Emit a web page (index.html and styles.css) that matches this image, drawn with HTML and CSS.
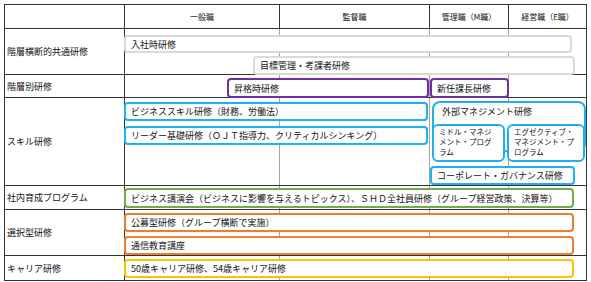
FILE: index.html
```html
<!DOCTYPE html>
<html lang="ja">
<head>
<meta charset="utf-8">
<title>研修体系</title>
<link rel="stylesheet" href="styles.css">
</head>
<body>
<div class="chart">
  <div class="hd"></div>
  <div class="hd">一般職</div>
  <div class="hd">監督職</div>
  <div class="hd">管理職（M職）</div>
  <div class="hd hd-last">経営職（E職）</div>

  <div class="label">階層横断的共通研修</div>
  <div class="row row-common">
    <div class="box gray b-nyusha">入社時研修</div>
    <div class="box gray b-mokuhyo">目標管理・考課者研修</div>
  </div>

  <div class="label">階層別研修</div>
  <div class="row row-rank">
    <div class="box purple b-shokaku">昇格時研修</div>
    <div class="box purple b-shinnin">新任課長研修</div>
  </div>

  <div class="label">スキル研修</div>
  <div class="row row-skill">
    <div class="skill-left">
      <div class="box blue wide304">ビジネススキル研修（財務、労働法）</div>
      <div class="box blue wide304 b-leader">リーダー基礎研修（ＯＪＴ指導力、クリティカルシンキング）</div>
    </div>
    <div class="skill-right">
      <div class="group">
        <div class="group-title">外部マネジメント研修</div>
        <div class="group-items">
          <div class="box blue mini mini-mid">ミドル・マネジ<br>メント・プログ<br>ラム</div>
          <div class="box blue mini mini-exe">エグゼクティブ・<br>マネジメント・プ<br>ログラム</div>
        </div>
      </div>
      <div class="box blue b-corp">コーポレート・ガバナンス研修</div>
    </div>
  </div>

  <div class="label">社内育成プログラム</div>
  <div class="row row-inhouse">
    <div class="box green full h20">ビジネス講演会（ビジネスに影響を与えるトピックス）、ＳＨＤ全社員研修（グループ経営政策、決算等）</div>
  </div>

  <div class="label">選択型研修</div>
  <div class="row row-select">
    <div class="box orange full">公募型研修（グループ横断で実施）</div>
    <div class="box orange full b-tsushin">通信教育講座</div>
  </div>

  <div class="label label-last">キャリア研修</div>
  <div class="row row-career row-last">
    <div class="box yellow full">50歳キャリア研修、54歳キャリア研修</div>
  </div>
</div>
</body>
</html>
```

FILE: styles.css
```css
* { box-sizing: border-box; }

html, body {
  margin: 0;
  background: #ffffff;
}

body {
  padding: 4px;
  font-family: "Noto Sans CJK JP", "Noto Sans", sans-serif;
  color: #111111;
}

.chart {
  display: grid;
  grid-template-columns: 120px 155px 150px 79px 77px;
  grid-template-rows: 24px 46px 23px 88px 24px 46px 24px;
  width: 583px;
  border: 1px solid #333333;
}

.hd {
  border-right: 1px solid #333333;
  border-bottom: 1px solid #333333;
  display: flex;
  align-items: center;
  justify-content: center;
  font-size: 8px;
  white-space: nowrap;
}

.hd-last { border-right: 0; }

.label {
  grid-column: 1;
  border-right: 1px solid #333333;
  border-bottom: 1px solid #333333;
  display: flex;
  align-items: center;
  padding-left: 2px;
  font-size: 9px;
  white-space: nowrap;
}

.label-last { border-bottom: 0; }

.row {
  grid-column: 2 / 6;
  border-bottom: 1px solid #333333;
  display: flex;
  align-items: flex-start;
  background:
    linear-gradient(#a6a6a6, #a6a6a6) 154px 0 / 1px 100% no-repeat,
    linear-gradient(#a6a6a6, #a6a6a6) 304px 0 / 1px 100% no-repeat,
    linear-gradient(#a6a6a6, #a6a6a6) 383px 0 / 1px 100% no-repeat;
}

.row-last { border-bottom: 0; }

/* boxes */
.box {
  flex: none;
  height: 19px;
  border: 2px solid #cccccc;
  border-radius: 4px;
  background: #ffffff;
  padding: 0 5px;
  display: flex;
  align-items: center;
  font-size: 9px;
  white-space: nowrap;
}

.gray { border-color: #dadada; }
.purple { border-color: #7030a0; }
.blue { border-color: #1fb1ee; }
.green { border-color: #70ad47; }
.orange { border-color: #ed7d31; }
.yellow { border-color: #ffc000; }

.full {
  width: 450px;
  margin-left: -1px;
}

.h20 { height: 20px; }

/* row: common */
.row-common {
  flex-direction: column;
  padding-top: 6px;
}

.b-nyusha {
  width: 448px;
  height: 18px;
  margin-left: -1px;
}

.b-mokuhyo {
  width: 322px;
  margin-top: 3px;
  margin-left: 128px;
}

/* row: rank */
.row-rank { padding-top: 3px; }

.b-shokaku {
  width: 202px;
  height: 20px;
  margin-left: 102px;
}

.b-shinnin {
  width: 79px;
  height: 20px;
  margin-left: 1px;
}

/* row: skill */
.skill-left {
  width: 304px;
  margin-left: -1px;
  padding-top: 4px;
  display: flex;
  flex-direction: column;
}

.wide304 { width: 304px; }

.b-leader { margin-top: 5px; }

.skill-right {
  width: 156px;
  margin-left: 2px;
  padding-top: 3px;
  display: flex;
  flex-direction: column;
}

.group {
  width: 154px;
  height: 51px;
  margin-left: 2px;
  border: 2px solid #1fb1ee;
  border-radius: 8px;
  background: #ffffff;
}

.group-title {
  height: 21px;
  padding: 0 0 4px 8px;
  display: flex;
  align-items: center;
  font-size: 9px;
  white-space: nowrap;
}

.group-items {
  display: flex;
  margin-left: -2px;
}

.mini {
  display: block;
  height: 38px;
  padding: 1px 0 0 5px;
  border-radius: 6px;
  font-size: 7.5px;
  line-height: 10px;
}

.mini-mid { width: 73px; }

.mini-exe {
  width: 78px;
  margin-left: 2px;
}

.b-corp {
  width: 145px;
  margin-top: 14px;
}

/* row: in-house */
.row-inhouse { padding-top: 2px; }

/* row: select */
.row-select {
  flex-direction: column;
  padding-top: 3px;
}

.b-tsushin { margin-top: 4px; }

/* row: career */
.row-career { padding-top: 3px; }
```
